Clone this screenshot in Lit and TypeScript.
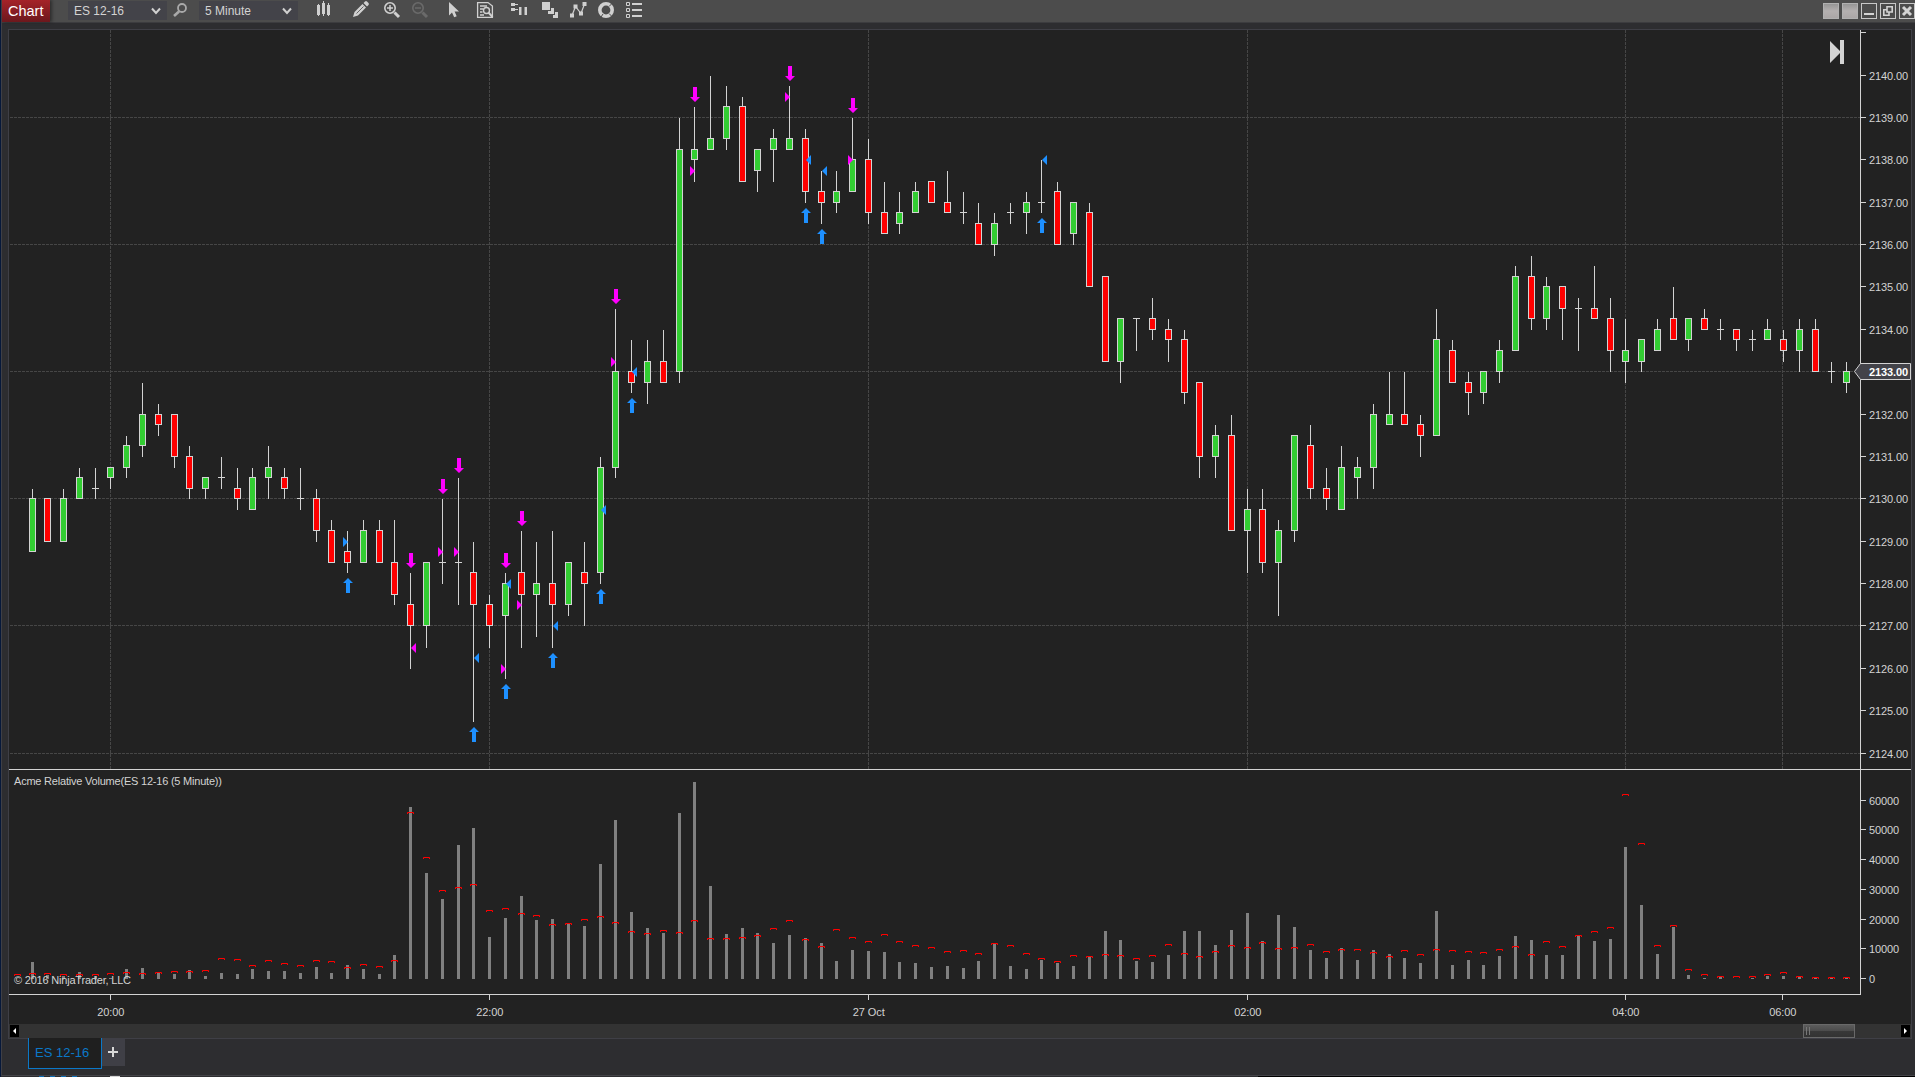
import { LitElement, html, svg, css, nothing } from "lit";
import { customElement } from "lit/decorators.js";

/* ---------- price data: [kind, bodyTop, bodyBottom, high, low] in quarter-point ticks from 2130.00 ---------- */
type Bar = [string, number, number, number, number];
const RAW = `G 0 -5 1 -5|R 0 -4 0 -4|G 0 -4 1 -4|G 2 0 3 0|D 1 1 3 0|G 3 2 3 1|G 5 3 6 2|G 8 5 11 4|R 8 7 9 6|R 8 4 8 3
R 4 1 5 0|G 2 1 2 0|D 2 2 4 1|R 1 0 3 -1|G 2 -1 3 -1|G 3 2 5 0|R 2 1 3 0|D 0 0 3 -1|R 0 -3 1 -4|R -3 -6 -2 -6
R -5 -6 -3 -7|G -3 -6 -2 -6|R -3 -6 -2 -6|R -6 -9 -2 -10|R -10 -12 -7 -16|G -6 -12 -6 -14|D -6 -6 0 -8|D -6 -6 2 -10|R -7 -10 -4 -21|R -10 -12 -9 -14
G -8 -11 -7 -17|R -7 -9 -3 -14|G -8 -9 -4 -13|R -8 -10 -3 -14|G -6 -10 -6 -11|R -7 -8 -4 -12|G 3 -7 4 -8|G 12 3 18 2|R 12 11 15 10|G 13 11 15 9
R 13 11 16 11|G 33 12 36 11|G 33 32 37 30|G 34 33 40 33|G 37 34 39 33|R 37 30 38 30|G 33 31 33 29|G 34 33 35 30|G 34 33 39 33|R 34 29 35 28
R 29 28 31 26|G 29 28 31 27|G 32 29 36 29|R 32 27 34 26|R 27 25 30 25|G 27 26 29 25|G 29 27 30 27|R 30 28 30 28|R 28 27 31 27|D 27 27 29 26
R 26 24 28 24|G 26 24 27 23|D 27 27 28 26|G 28 27 29 25|D 28 28 32 27|R 29 24 30 24|G 28 25 28 24|R 27 20 28 20|R 21 13 21 13|G 17 13 17 11
D 17 17 17 14|R 17 16 19 15|R 16 15 17 13|R 15 10 16 9|R 11 4 11 2|G 6 4 7 2|R 6 -3 8 -3|G -1 -3 1 -7|R -1 -6 1 -7|G -3 -6 -2 -11
G 6 -3 6 -4|R 5 1 7 0|R 1 0 3 -1|G 3 -1 5 -1|G 3 2 4 0|G 8 3 9 1|G 8 7 12 7|R 8 7 12 7|R 7 6 8 4|G 15 6 18 6
R 14 11 15 11|R 11 10 12 8|G 12 10 12 9|G 14 12 15 11|G 21 14 22 14|R 21 17 23 16|G 20 17 21 16|R 20 18 20 15|D 18 18 19 14|R 18 17 22 17
R 17 14 19 12|G 14 13 17 11|G 15 13 15 12|G 16 14 17 14|R 17 15 20 15|G 17 15 17 14|R 17 16 18 16|D 16 16 17 15|R 16 15 16 14|D 15 15 16 14
G 16 15 17 15|R 15 14 16 13|G 16 14 17 12|R 16 12 17 12|D 12 12 13 11|G 12 11 13 10`;
const BARS: Bar[] = RAW.split(/[|\n]/).map((s) => {
  const [k, ...n] = s.trim().split(" ");
  return [k, ...n.map(Number)] as Bar;
});

/* volume bar heights and average-volume levels, in pixels */
const VOLUME = [
  17, 4, 3, 7, 3, 1, 10, 11, 7, 5, 9, 3, 6, 5, 10, 8, 8, 6, 12, 6, 14, 10, 5, 24, 172, 106, 80, 134, 151, 42,
  61, 83, 59, 60, 55, 53, 115, 159, 67, 51, 46, 166, 197, 93, 45, 51, 46, 36, 44, 41, 36, 18, 29, 28, 27, 17, 16, 12, 13, 11,
  18, 35, 13, 10, 19, 16, 13, 22, 48, 39, 18, 17, 24, 48, 48, 34, 49, 66, 38, 64, 52, 29, 21, 31, 19, 29, 25, 21, 16, 68,
  14, 19, 14, 23, 43, 39, 24, 24, 43, 38, 40, 132, 74, 25, 52, 4, 1, 2, 0, 1, 3, 3, 2, 1, 1, 1,
];
const AVERAGE = [
  213, 213, 214, 214, 214, 213, 212, 213, 212, 211, 211, 210, 198, 199, 205, 200, 203, 205, 200, 201, 207, 204, 206, 200, 52, 97, 130, 127, 124, 150,
  148, 153, 155, 164, 163, 159, 156, 162, 171, 173, 170, 172, 160, 178, 178, 177, 175, 168, 160, 179, 186, 169, 177, 181, 174, 181, 185, 187, 191, 190,
  193, 183, 185, 193, 198, 201, 195, 196, 194, 195, 198, 195, 184, 193, 196, 191, 185, 187, 182, 188, 187, 184, 191, 189, 189, 192, 196, 190, 194, 189,
  190, 191, 192, 189, 186, 194, 181, 186, 175, 171, 167, 34, 83, 185, 165, 209, 214, 216, 216, 216, 214, 212, 216, 217, 217, 217,
];

/* bars sit 16px apart, with a 15px step at these indices */
const SHORT = new Set([1, 5, 10, 14, 19, 23, 28, 32, 37, 42, 46, 51, 55, 60, 64, 69, 74, 78, 83, 87, 92, 96, 101, 105, 110, 115]);
const XS: number[] = [32];
for (let i = 1; i < BARS.length; i++) XS.push(XS[i - 1] + (SHORT.has(i) ? 15 : 16));
const Y = (t: number) => Math.floor(498.78 - 10.5925 * t);

/* trade markers: [bar, side triangle ("l"/"r"), color, tick] */
const FILLS: [number, string, string, number][] = [
  [20, "r", "b", -4], [24, "l", "m", -14], [26, "r", "m", -5], [27, "r", "m", -5], [28, "l", "b", -15],
  [30, "l", "b", -8], [30, "r", "m", -16], [31, "r", "m", -10], [33, "l", "b", -12], [36, "l", "b", -1],
  [37, "r", "m", 13], [38, "l", "b", 12], [42, "r", "m", 31], [48, "r", "m", 38], [49, "l", "b", 32],
  [50, "l", "b", 31], [52, "r", "m", 32], [64, "l", "b", 32],
];
const SELLS = [24, 26, 27, 30, 31, 37, 42, 48, 52];
const BUYS = [20, 28, 30, 33, 36, 38, 49, 50, 64];

const GRID_X: [number, string][] = [[110, "20:00"], [489, "22:00"], [868, "27 Oct"], [1247, "02:00"], [1625, "04:00"], [1782, "06:00"]];
const GRID_T = [36, 24, 12, 0, -12, -24];
const VOL_AXIS: [number, string][] = [[800, "60000"], [829, "50000"], [859, "40000"], [889, "30000"], [919, "20000"], [948, "10000"], [978, "0"]];
const LAST = 2133;

@customElement("price-chart")
export class PriceChart extends LitElement {
  static styles = css`
    :host { display: block; }
    svg { display: block; }
    text { font-family: "Liberation Sans", Arial, sans-serif; font-size: 11px; fill: #d3d3d3; }
    .grid { stroke: #464646; stroke-width: 1; stroke-dasharray: 3 1; }
    .axis { fill: #d3d3d3; }
    .wick { fill: #d3d3d3; }
    .G { fill: #32cd32; stroke: #d3d3d3; }
    .R { fill: #ff0000; stroke: #d3d3d3; }
    .vol { fill: #808080; }
    .avg { fill: none; stroke: #ff0000; }
    .m { fill: #ff00ff; }
    .b { fill: #1e90ff; }
    .tag { fill: #434349; stroke: #d3d3d3; }
    .now { font-weight: bold; fill: #ffffff; }
    .end { fill: #d3d3d3; }
  `;

  private candle(b: Bar, i: number) {
    const x = XS[i];
    const [k, top, bot, hi, lo] = b;
    const y1 = hi > top ? Y(hi) + 1 : Y(top);
    return svg`<rect class="wick" x=${x} y=${y1} width="1" height=${Y(lo) + 1 - y1}></rect>
      ${k === "D"
        ? svg`<rect class="wick" x=${x - 3} y=${Y(top)} width="7" height="1"></rect>`
        : svg`<rect class=${k} x=${x - 2.5} y=${Y(top) + 0.5} width="6" height=${Y(bot) - Y(top)}></rect>`}`;
  }

  private fillMark([i, side, color, t]: [number, string, string, number]) {
    const c = XS[i] + 1;
    const y = Y(t) + 1;
    const base = side === "r" ? c - 5 : c + 5;
    return svg`<path class=${color} d="M${c} ${y}L${base} ${y - 5}V${y + 5}Z"></path>`;
  }

  private average(x: number, v: number) {
    const y = 760.5 + v;
    return svg`<path class="avg" d="M${x - 2.5} ${y + 1.5}V${y}H${x + 3.5}V${y + 1.5}"></path>`;
  }

  render() {
    const prices = Array.from({ length: 17 }, (_, k) => 2140 - k);
    return html`<svg width="1902" height="994" viewBox="9 30 1902 994">
      ${GRID_T.map((t) => svg`<path class="grid" d="M10 ${Y(t) + 0.5}H1860"></path>`)}
      ${GRID_X.map(([x]) => svg`<path class="grid" d="M${x + 0.5} 769V30"></path>`)}

      ${BARS.map((b, i) => this.candle(b, i))}
      ${FILLS.map((f) => this.fillMark(f))}
      ${SELLS.map((i) => {
        const c = XS[i] + 1, y = Y(BARS[i][3]) - 4;
        return svg`<path class="m" d="M${c} ${y}l-5 -5h3v-10h4v10h3z"></path>`;
      })}
      ${BUYS.map((i) => {
        const c = XS[i] + 1, y = Y(BARS[i][4]) + 6;
        return svg`<path class="b" d="M${c} ${y}l-5 5h3v10h4v-10h3z"></path>`;
      })}

      ${VOLUME.map((h, i) => svg`<rect class="vol" x=${XS[i] - 1} y=${979 - h} width="3" height=${h}></rect>`)}
      ${this.average(17, 214)}
      ${AVERAGE.map((v, i) => this.average(XS[i], v))}

      <rect class="axis" x="9" y="769" width="1902" height="1"></rect>
      <rect class="axis" x="9" y="994" width="1852" height="1"></rect>
      <rect class="axis" x="1860" y="30" width="1" height="965"></rect>
      <rect class="axis" x="1861" y="32" width="5" height="1"></rect>
      ${prices.map((p) => {
        const y = Y((p - 2130) * 4);
        return svg`<rect class="axis" x="1861" y=${y} width="5" height="1"></rect>
          ${p === LAST ? nothing : svg`<text x="1869" y=${y + 5} textLength="39">${p}.00</text>`}`;
      })}
      ${VOL_AXIS.map(([y, s]) => svg`<rect class="axis" x="1861" y=${y} width="5" height="1"></rect>
        <text x="1869" y=${y + 5} textLength=${s.length * 6}>${s}</text>`)}
      ${GRID_X.map(([x, s]) => svg`<rect class="axis" x=${x} y="995" width="1" height="5"></rect>
        <text x=${x + 0.8} y="1016" text-anchor="middle" textLength=${s === "27 Oct" ? 32 : 27}>${s}</text>`)}

      <path class="tag" d="M1854.5 371.5L1860.5 363.5H1910.5V379.5H1860.5Z"></path>
      <text class="now" x="1869" y="376" textLength="39">${LAST}.00</text>
      <path class="end" d="M1830 41L1840 51V40H1844V64H1840V53L1830 63Z"></path>
      <text x="14" y="785" textLength="208">Acme Relative Volume(ES 12-16 (5 Minute))</text>
      <text x="14" y="984" textLength="117">© 2016 NinjaTrader, LLC</text>
    </svg>`;
  }
}

/* toolbar glyphs; each owns a contiguous slice [x, width] of the toolbar */
const I = "#d0d0d0";
const TOOLS: [number, number, unknown][] = [
  [307, 35, svg`<path fill=${I} d="M317 5h1v-1h1v1h1v10h-1v1h-1v-1h-1zM322 3h1v-2h1v2h1v11h-1v2h-1v-2h-1zM327 5h1v-2h1v2h1v10h-1v1h-1v-1h-1z"></path>`],
  [342, 34, svg`<path fill=${I} d="M353 17l1.5-5 8-8 3.5 3.5-8 8zM363.5 3l1.5-1.6q1-.8 2 0l1.5 1.5q.8 1 0 2L367 6.400z"></path><path stroke="#4c4c4c" stroke-width=".8" d="M356.500 13.500l7-7"></path>`],
  [376, 30, svg`<g fill="none" stroke=${I}><circle cx="390" cy="8" r="5.200" stroke-width="1.600"></circle><path stroke-width="1.500" d="M387 8h6M390 5v6"></path><path stroke-width="3" d="M394.500 12.500l4.500 4.500"></path></g>`],
  [406, 31, svg`<g fill="none" stroke="#6a6a6a"><circle cx="418" cy="8" r="5.200" stroke-width="1.600"></circle><path stroke-width="1.500" d="M415 8h6"></path><path stroke-width="3" d="M422.500 12.500l4.500 4.500"></path></g>`],
  [437, 32, svg`<path fill=${I} d="M449 2V15.500l3-3 2.200 4.800 2.500-1-2.100-4.800H459z"></path>`],
  [469, 32, svg`<g fill="none" stroke=${I}><path stroke-width="1.300" d="M477.600 2.600H488l4.400 3.500V17.400H477.600zM480 6h7M480 9h3M480 12h2.500M480 15h4"></path><circle cx="486.500" cy="10.500" r="3" stroke-width="1.400"></circle><path stroke-width="2" d="M488.500 12.500l4 4.500"></path></g>`],
  [501, 32, svg`<path fill=${I} d="M511 3h4v1h3v1h-3v1h-4zM511 8h4v1h3v1h-3v1h-4zM519 7h2.500v8h-2.500zM524.500 7h2.500v8h-2.500z"></path>`],
  [533, 30, svg`<path fill=${I} d="M542 2h8v8h-8zM548 11h3v-3h3v6h-6zM553 15h2v-3h3v6h-5z"></path>`],
  [563, 29, svg`<path fill="none" stroke=${I} stroke-width="1.200" d="M572 15.500L575.500 6.500 581 13.500 584.500 4"></path><path fill=${I} d="M570 13.500h4v4h-4zM573.500 4.500h4v4h-4zM579 11.500h4v4h-4zM582.500 2h4v4h-4z"></path>`],
  [592, 28, svg`<circle cx="606" cy="10" r="6.200" fill="none" stroke=${I} stroke-width="3.600"></circle><path stroke="#4c4c4c" stroke-width="1" d="M609 6.500l3-3M609 13.500l3 3M603 14l-2 3"></path>`],
  [620, 30, svg`<path fill="none" stroke=${I} d="M626.500 2.500h3v3h-3zM626.500 8.500h3v3h-3zM626.500 14.500h3v3h-3z"></path><path fill=${I} d="M632 3h10v2h-10zM632 9h10v2h-10zM632 15h10v2h-10z"></path>`],
];

@customElement("app-root")
export class AppRoot extends LitElement {
  static styles = css`
    :host {
      display: flex; flex-direction: column; box-sizing: border-box;
      width: 1915px; height: 1077px; overflow: hidden; background: #2d2d30;
      border-left: 1px solid #06183a;
      font-family: "Liberation Sans", Arial, sans-serif; color: #d3d3d3;
    }
    .window { flex: 1; display: flex; flex-direction: column; border-left: 1px solid #3f3f46; border-bottom: 1px solid #434348; min-height: 0; }
    .bar { display: flex; height: 22px; flex: none; background: #4c4c4c; border-bottom: 1px solid #3c3c3f; }
    .title { width: 48px; height: 22px; box-sizing: border-box; padding-left: 6px; background: linear-gradient(#a52329, #6d181d); color: #fff; font-size: 14.500px; line-height: 22px; box-shadow: 2px 0 3px rgba(0,0,0,.4); }
    .select { display: flex; justify-content: space-between; align-items: center; width: 99px; height: 19px; margin-top: 1px; box-sizing: border-box; padding: 0 6px; background: #434349; font-size: 12px; line-height: 18px; }
    .select span { padding-top: 1px; }
    .first { margin-left: 18px; }
    .find { display: block; }
    .tools { display: flex; margin-left: 9px; }
    .controls { display: flex; gap: 3px; margin-left: auto; padding-top: 3px; }
    .controls svg, .tools svg, .select svg { display: block; }
    .frame { margin: 6px 3px 0 6px; border: 1px solid #3f3f46; background: #222222; width: 1902px; flex: none; }
    .scroll { display: flex; height: 14px; background: #333333; align-items: center; }
    .arrow { width: 9px; height: 12px; background: #000; display: block; }
    .arrow.left { margin-left: 1px; }
    .arrow.right { margin: 0 1px 0 46px; }
    .thumb { box-sizing: border-box; width: 52px; height: 14px; margin-left: auto; border: 1px solid #696969; background: linear-gradient(#5c5c5c, #4b4b4b 50%, #383838 51%, #333); display: flex; gap: 2px; padding: 2px 2px; }
    .thumb i { width: 1px; height: 8px; background: #777; }
    .tabs { display: flex; margin-top: -1px; padding-left: 26px; align-items: flex-start; }
    .tab { box-sizing: border-box; width: 74px; height: 31px; border: 1px solid #0b78c8; border-top: none; background: #1f1f1f; color: #0b78c8; font-size: 13px; line-height: 29px; padding-left: 6px; }
    .add { width: 23px; height: 28px; background: #3f3f46; }
    .under { flex: none; height: 1px; background: linear-gradient(90deg, #2d2d30 1257px, #000 1257px); display: flex; padding-left: 38px; }
    .under b { height: 1px; background: #0b6cb4; margin-right: 6px; width: 5px; }
    .under b.plus { background: #d3d3d3; width: 10px; margin-left: 27px; }
  `;

  private chevron() {
    return html`<svg width="10" height="8" viewBox="0 0 10 8"><path d="M1 1.500L5 6L9 1.500" fill="none" stroke="#d0d0d0" stroke-width="2"></path></svg>`;
  }

  render() {
    return html`
      <div class="window">
        <div class="bar">
          <div class="title">Chart</div>
          <div class="select first"><span>ES 12-16</span>${this.chevron()}</div>
          <svg class="find" width="32" height="22" viewBox="167 0 32 22"><g fill="none" stroke="#a9a9a9"><circle cx="182" cy="8" r="4" stroke-width="1.800"></circle><path stroke-width="2.600" d="M179 11.500l-5 4.500"></path></g></svg>
          <div class="select"><span>5 Minute</span>${this.chevron()}</div>
          <div class="tools">
            ${TOOLS.map(([x, w, art]) => html`<svg width=${w} height="22" viewBox="${x} 0 ${w} 22">${art}</svg>`)}
          </div>
          <div class="controls">
            ${[0, 1].map(() => html`<svg width="16" height="16" viewBox="0 0 16 16"><defs><linearGradient id="g" x2="0" y2="1"><stop offset="0" stop-color="#939393"></stop><stop offset=".5" stop-color="#b4b0b0"></stop><stop offset="1" stop-color="#aaa6a6"></stop></linearGradient></defs><rect x=".5" y=".5" width="15" height="15" fill="url(#g)" stroke="#b0b0b0"></rect></svg>`)}
            <svg width="16" height="16" viewBox="0 0 16 16"><rect x=".5" y=".5" width="15" height="15" fill="none" stroke="#c8c8c8"></rect><path fill="#d3d3d3" d="M3 10h10v2H3z"></path></svg>
            <svg width="16" height="16" viewBox="0 0 16 16"><rect x=".5" y=".5" width="15" height="15" fill="none" stroke="#c8c8c8"></rect><path fill="none" stroke="#d3d3d3" stroke-width="1.600" d="M7 3.800h5.200V9H7zM7 6.800H3.800V12.200H9V9"></path></svg>
            <svg width="16" height="16" viewBox="0 0 16 16"><rect x=".5" y=".5" width="15" height="15" fill="none" stroke="#c8c8c8"></rect><path fill="none" stroke="#d3d3d3" stroke-width="3" d="M4 4l8 8M12 4l-8 8"></path></svg>
          </div>
        </div>
        <div class="frame">
          <price-chart></price-chart>
          <div class="scroll">
            <svg class="arrow left" viewBox="0 0 9 12"><path fill="#fff" d="M6 3v6L3 6z"></path></svg>
            <div class="thumb"><i></i><i></i></div>
            <svg class="arrow right" viewBox="0 0 9 12"><path fill="#fff" d="M3 3v6l3-3z"></path></svg>
          </div>
        </div>
        <div class="tabs">
          <div class="tab">ES 12-16</div>
          <svg class="add" viewBox="0 0 23 28"><path fill="#d8d8d8" d="M10 9h2v4h4v2h-4v4h-2v-4H6v-2h4z"></path></svg>
        </div>
      </div>
      <div class="under"><b></b><b></b><b></b><b></b><b class="plus"></b></div>
    `;
  }
}
